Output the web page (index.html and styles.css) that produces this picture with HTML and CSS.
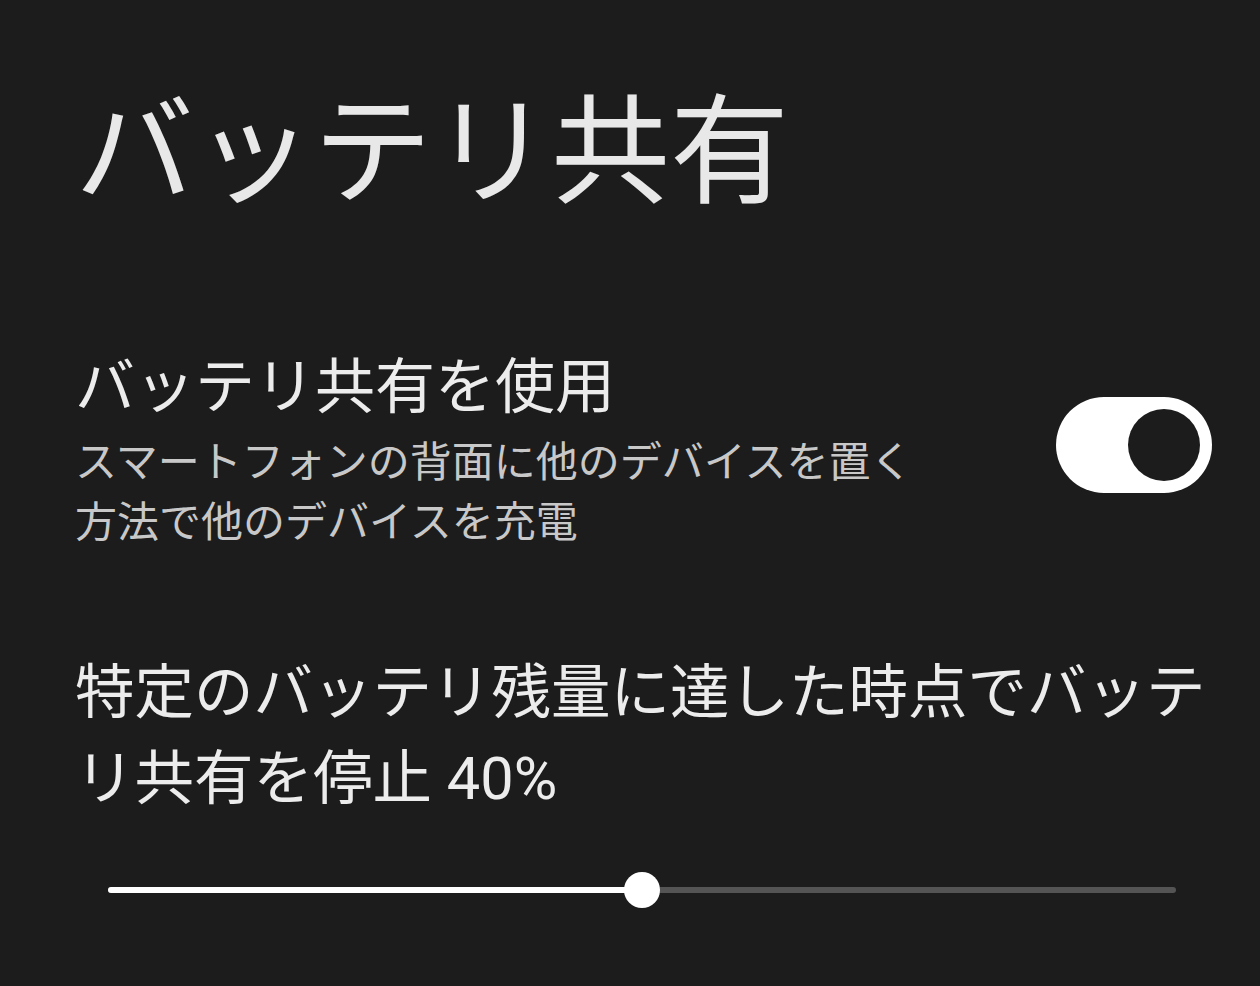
FILE: index.html
```html
<!DOCTYPE html>
<html lang="ja">
<head>
<meta charset="utf-8">
<title>バッテリ共有</title>
<link rel="stylesheet" href="styles.css">
</head>
<body>
<main class="page">
  <h1 class="page-title">バッテリ共有</h1>

  <section class="setting-row">
    <div class="setting-text">
      <div class="setting-title">バッテリ共有を使用</div>
      <div class="setting-summary">スマートフォンの背面に他のデバイスを置く<br>方法で他のデバイスを充電</div>
    </div>
    <div class="switch is-on" role="switch" aria-checked="true">
      <span class="switch-thumb"></span>
    </div>
  </section>

  <section class="slider-setting">
    <div class="slider-label">特定のバッテリ残量に達した時点でバッテリ共有を停止 40%</div>
    <div class="slider">
      <div class="slider-track">
        <div class="slider-fill" style="width: 50%"></div>
        <span class="slider-thumb" style="left: 50%"></span>
      </div>
    </div>
  </section>
</main>
</body>
</html>
```

FILE: styles.css
```css
html, body {
  margin: 0;
  padding: 0;
  background: #1c1c1c;
}

body {
  width: 1260px;
  height: 986px;
  overflow: hidden;
  font-family: "Noto Sans CJK JP", "Noto Sans", sans-serif;
  color: #e6e6e6;
}

.page {
  padding: 0 40px 0 75px;
}

.page-title {
  margin: 0;
  padding-top: 77px;
  font-size: 119px;
  font-weight: 400;
  line-height: 130px;
  color: #e8e8e8;
}

.setting-row {
  display: flex;
  align-items: center;
  justify-content: space-between;
  margin-top: 137px;
  padding-right: 8px;
}

.setting-text {
  display: flex;
  flex-direction: column;
}

.setting-title {
  font-size: 60px;
  line-height: 76px;
  margin-bottom: 9px;
  color: #ececec;
}

.setting-summary {
  font-size: 42px;
  line-height: 60px;
  color: #c8c8c8;
}

/* toggle switch, "on" state: white pill with a dark knob on the right */
.switch {
  width: 156px;
  height: 96px;
  margin-top: -4px;
  border-radius: 48px;
  background: #ffffff;
  display: flex;
  align-items: center;
  justify-content: flex-end;
  padding: 0 12px;
  box-sizing: border-box;
  flex-shrink: 0;
}

.switch-thumb {
  width: 72px;
  height: 72px;
  border-radius: 50%;
  background: #1c1c1c;
}

.slider-setting {
  margin-top: 101px;
}

/* Roboto draws the digits; the kana and kanji fall through to Noto CJK */
.slider-label {
  font-family: "Roboto", "Noto Sans CJK JP", sans-serif;
  font-size: 59.5px;
  line-height: 86px;
  color: #ececec;
}

.slider {
  padding: 65px 44px 0 33px;
}

.slider-track {
  position: relative;
  height: 6px;
  border-radius: 3px;
  background: #545454;
}

.slider-fill {
  height: 100%;
  border-radius: 3px;
  background: #ffffff;
}

.slider-thumb {
  position: absolute;
  top: 50%;
  width: 36px;
  height: 36px;
  margin: -18px 0 0 -18px;
  border-radius: 50%;
  background: #ffffff;
}
```
